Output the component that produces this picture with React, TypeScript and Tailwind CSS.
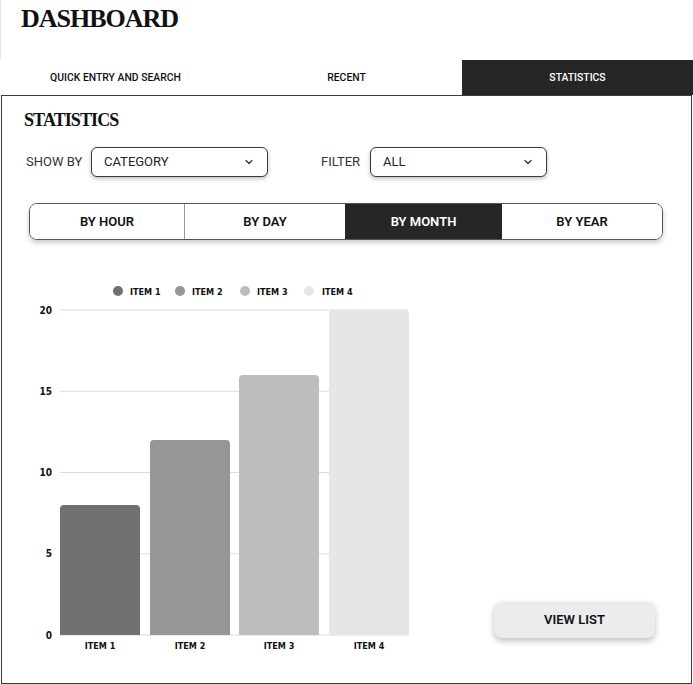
import { ChevronDown } from 'lucide-react'

const tabs = ['QUICK ENTRY AND SEARCH', 'RECENT', 'STATISTICS']
const ranges = ['BY HOUR', 'BY DAY', 'BY MONTH', 'BY YEAR']

const items = [
  { label: 'ITEM 1', value: 8, color: '#707070', x: 40, lx: 98, tx: 110 },
  { label: 'ITEM 2', value: 12, color: '#969696', x: 130, lx: 160, tx: 172 },
  { label: 'ITEM 3', value: 16, color: '#bdbdbd', x: 219, lx: 225, tx: 237 },
  { label: 'ITEM 4', value: 20, color: '#e6e6e6', x: 309, lx: 289, tx: 302 },
]

const chartFont = '"DejaVu Sans Condensed", "DejaVu Sans", sans-serif'

function barPath(x: number, top: number, w: number, bottom: number) {
  const r = 4
  return `M${x} ${bottom} V${top + r} Q${x} ${top} ${x + r} ${top} H${x + w - r} Q${x + w} ${top} ${x + w} ${top + r} V${bottom} Z`
}

function Select({ value }: { value: string }) {
  return (
    <div className="w-[177px] h-[30px] flex items-center justify-between pl-3 pr-3 border border-[#3a3a3a] rounded-md bg-white shadow-[0_2px_4px_rgba(0,0,0,0.25)] text-[13px] text-[#222]">
      <span>{value}</span>
      <ChevronDown size={12} strokeWidth={2.5} className="text-[#333]" />
    </div>
  )
}

function Chart() {
  const bottom = 364
  const unit = 16.25
  return (
    <svg width={400} height={385} className="block">
      {items.map((it) => (
        <g key={it.label}>
          <circle cx={it.lx} cy={20} r={5} fill={it.color} />
          <text x={it.tx} y={23.5} fontSize={9} fontWeight={700} fontFamily={chartFont} fill="#111">
            {it.label}
          </text>
        </g>
      ))}
      {[20, 15, 10, 5, 0].map((v) => {
        const y = bottom - v * unit
        return (
          <g key={v}>
            <line x1={40} x2={388} y1={y} y2={y} stroke="#dcdcdc" strokeWidth={1} />
            <text x={32} y={y + 3.5} fontSize={10} fontWeight={700} textAnchor="end" fontFamily={chartFont} fill="#111">
              {v}
            </text>
          </g>
        )
      })}
      {items.map((it) => (
        <g key={it.label + 'b'}>
          <path d={barPath(it.x, bottom - it.value * unit, 80, bottom)} fill={it.color} />
          <text x={it.x + 40} y={378} fontSize={9} fontWeight={700} textAnchor="middle" fontFamily={chartFont} fill="#111">
            {it.label}
          </text>
        </g>
      ))}
    </svg>
  )
}

export default function App() {
  return (
    <div className="w-[693px] h-[684px] bg-white font-['Roboto',sans-serif] text-[#111] flex flex-col overflow-hidden">
      <h1 className="h-[60px] pl-5 pt-[4px] font-['Liberation_Serif',serif] font-bold text-[26px] leading-[30px] tracking-[-1px] border-l border-[#e8e8e8]">
        DASHBOARD
      </h1>
      <div className="flex h-[35px]">
        {tabs.map((t, i) => (
          <div
            key={t}
            className={`flex-1 flex items-center justify-center pt-px text-[10.4px] font-medium ${
              i === 2 ? 'bg-[#262626] text-white' : 'text-[#111]'
            }`}
          >
            {t}
          </div>
        ))}
      </div>
      <div className="flex-1 ml-px mr-px border border-[#3a3a3a] flex flex-col">
        <h2 className="mt-[13px] ml-[22px] font-['Liberation_Serif',serif] text-[18px] leading-[22px] font-bold tracking-[-0.9px]">
          STATISTICS
        </h2>
        <div className="mt-[16px] ml-[24px] flex items-center">
          <span className="w-[65px] text-[13px] text-[#333]">SHOW BY</span>
          <Select value="CATEGORY" />
          <span className="w-[49px] ml-[53px] text-[13px] text-[#333]">FILTER</span>
          <Select value="ALL" />
        </div>
        <div className="mt-[26px] ml-[27px] w-[634px] h-[37px] flex rounded-lg border border-[#555] overflow-hidden shadow-[0_3px_5px_rgba(0,0,0,0.2)]">
          {ranges.map((r, i) => (
            <div
              key={r}
              className={`flex items-center justify-center text-[13px] font-semibold ${
                i === 0 ? 'w-[155px] border-r border-[#999]' : i === 1 ? 'w-[160px]' : i === 2 ? 'w-[157px]' : 'flex-1'
              } ${i === 2 ? 'bg-[#262626] text-white' : 'bg-white text-[#111]'}`}
            >
              {r}
            </div>
          ))}
        </div>
        <div className="mt-[31px] ml-[18px] flex items-end">
          <Chart />
          <button className="ml-[74px] mb-[18px] w-[161px] h-[36px] rounded-lg bg-[#ececef] text-[13px] font-semibold text-[#111] shadow-[0_3px_6px_rgba(0,0,0,0.25)]">
            VIEW LIST
          </button>
        </div>
      </div>
    </div>
  )
}
